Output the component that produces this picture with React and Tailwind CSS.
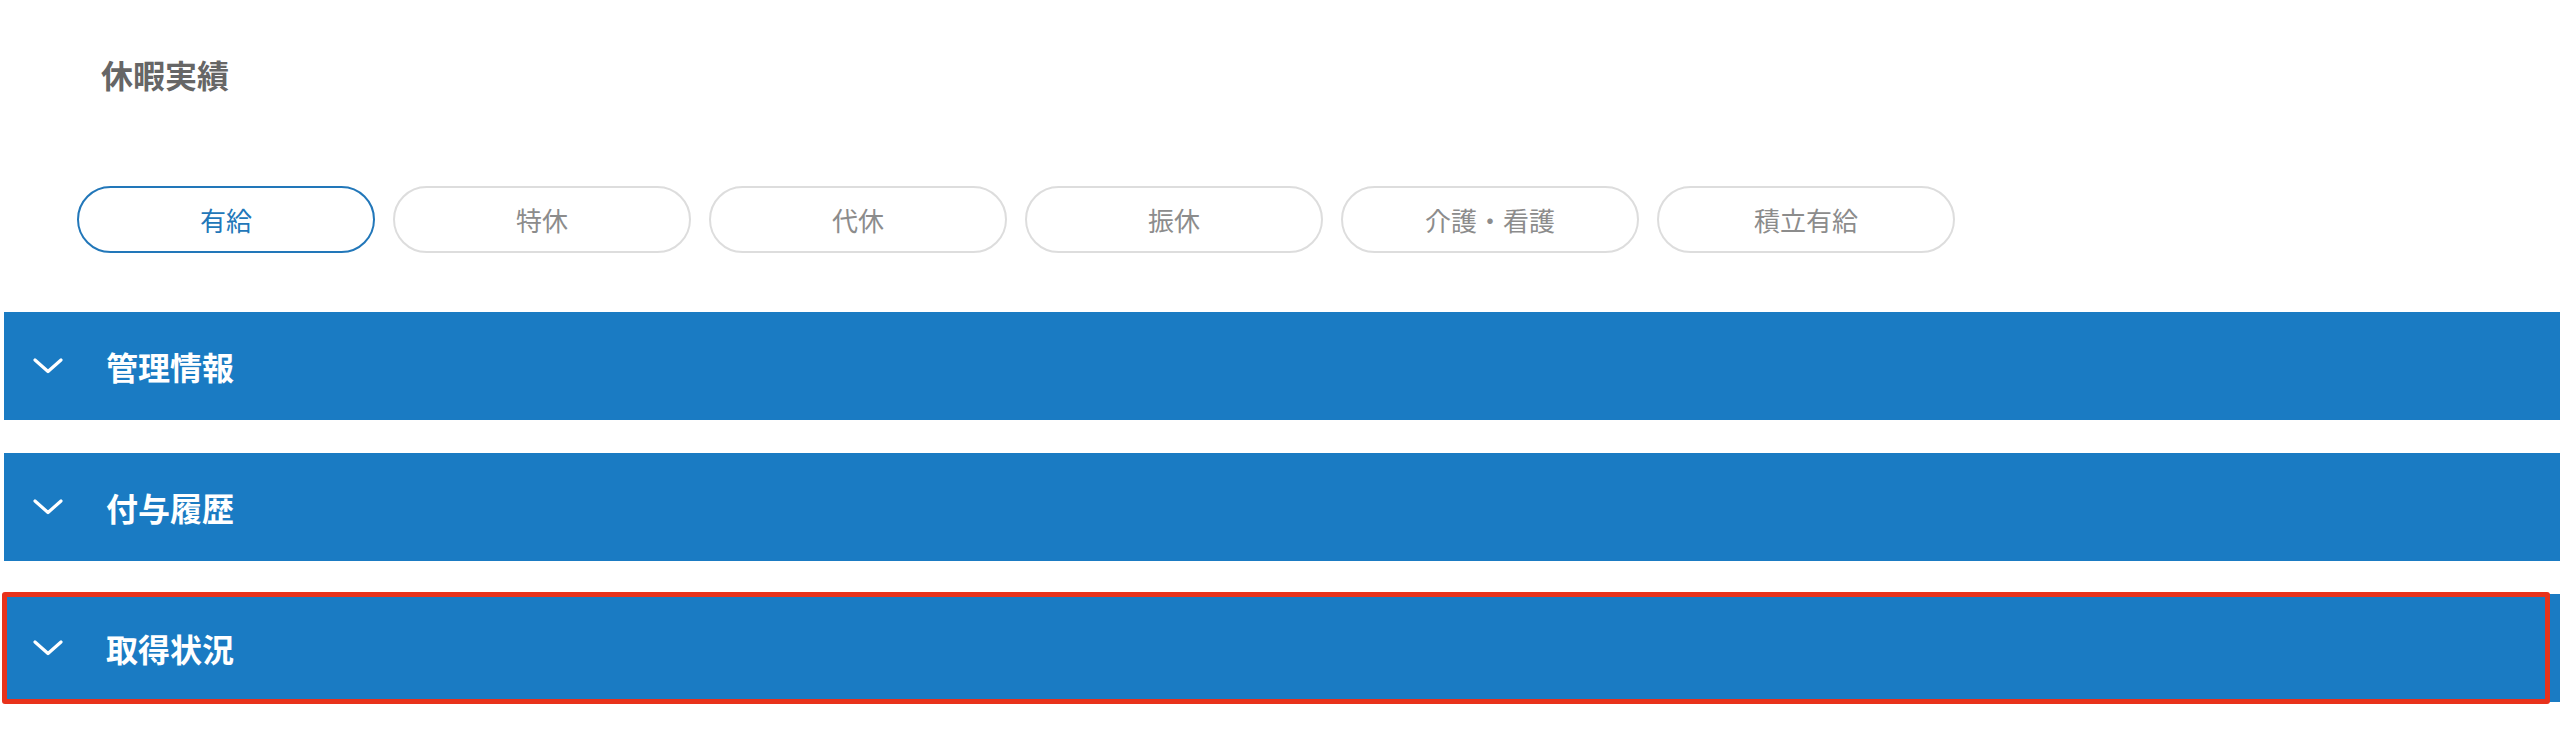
import React, { useState } from 'react';

const tabs = ['有給', '特休', '代休', '振休', '介護・看護', '積立有給'];
const sections = ['管理情報', '付与履歴', '取得状況'];

export default function App() {
  const [active, setActive] = useState(0);

  return (
    <div
      className="relative w-[2560px] h-[729px] bg-white overflow-hidden"
      style={{ fontFamily: '"Noto Sans CJK JP", "Noto Sans", sans-serif' }}
    >
      {/* Title */}
      <h1 className="pt-[50px] pl-[101px] text-[32px] leading-[48px] font-bold text-[#666666]">
        休暇実績
      </h1>

      {/* Leave type tabs */}
      <div className="mt-[88px] pl-[77px] flex gap-[18px]">
        {tabs.map((t, i) => (
          <button
            key={t}
            onClick={() => setActive(i)}
            className={`w-[298px] h-[67px] rounded-full border-2 bg-white text-[26px] leading-none flex items-center justify-center ${
              i === active
                ? 'border-[#2277b9] text-[#2277b9]'
                : 'border-[#dddddd] text-[#8c8c8c]'
            }`}
          >
            {t}
          </button>
        ))}
      </div>

      {/* Accordion sections */}
      <div className="mt-[59px] pl-[4px] flex flex-col gap-[33px]">
        {sections.map((s) => (
          <AccordionBar key={s} label={s} />
        ))}
      </div>

      {/* Highlight annotation */}
      <div className="absolute left-[2px] top-[592px] w-[2548px] h-[112px] border-[5px] border-[#e8321b] rounded-[3px] pointer-events-none" />
    </div>
  );
}

function AccordionBar({ label }) {
  return (
    <div className="h-[108px] bg-[#1a7bc3] flex items-center">
      <svg
        className="ml-[29px] w-[30px] h-[16px]"
        viewBox="0 0 30 16"
        fill="none"
        stroke="white"
        strokeWidth="3.2"
        strokeLinecap="round"
        strokeLinejoin="round"
      >
        <path d="M2 2 L15 13.5 L28 2" />
      </svg>
      <span className="ml-[43px] text-[32px] leading-none font-bold text-white">{label}</span>
    </div>
  );
}
